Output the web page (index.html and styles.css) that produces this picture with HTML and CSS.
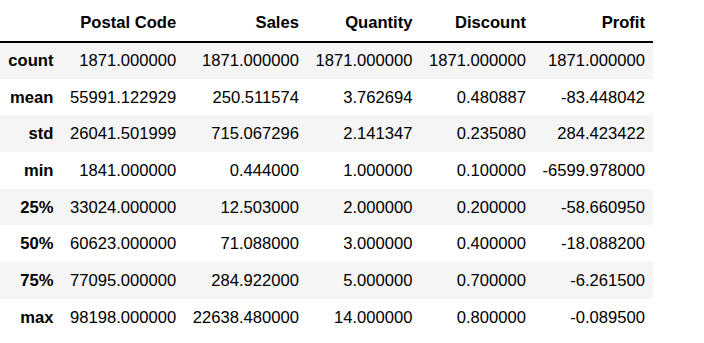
FILE: index.html
```html
<!DOCTYPE html>
<html lang="en">
<head>
  <meta charset="UTF-8">
  <title>describe()</title>
  <link rel="stylesheet" href="styles.css">
</head>
<body>
  <table class="dataframe">
    <thead>
      <tr>
        <th></th>
        <th>Postal Code</th>
        <th>Sales</th>
        <th>Quantity</th>
        <th>Discount</th>
        <th>Profit</th>
      </tr>
    </thead>
    <tbody>
      <tr><th>count</th><td>1871.000000</td><td>1871.000000</td><td>1871.000000</td><td>1871.000000</td><td>1871.000000</td></tr>
      <tr><th>mean</th><td>55991.122929</td><td>250.511574</td><td>3.762694</td><td>0.480887</td><td>-83.448042</td></tr>
      <tr><th>std</th><td>26041.501999</td><td>715.067296</td><td>2.141347</td><td>0.235080</td><td>284.423422</td></tr>
      <tr><th>min</th><td>1841.000000</td><td>0.444000</td><td>1.000000</td><td>0.100000</td><td>-6599.978000</td></tr>
      <tr><th>25%</th><td>33024.000000</td><td>12.503000</td><td>2.000000</td><td>0.200000</td><td>-58.660950</td></tr>
      <tr><th>50%</th><td>60623.000000</td><td>71.088000</td><td>3.000000</td><td>0.400000</td><td>-18.088200</td></tr>
      <tr><th>75%</th><td>77095.000000</td><td>284.922000</td><td>5.000000</td><td>0.700000</td><td>-6.261500</td></tr>
      <tr><th>max</th><td>98198.000000</td><td>22638.480000</td><td>14.000000</td><td>0.800000</td><td>-0.089500</td></tr>
    </tbody>
  </table>
</body>
</html>
```

FILE: styles.css
```css
* {
  box-sizing: border-box;
}

html, body {
  margin: 0;
  padding: 0;
  background: #fff;
  font-family: "Liberation Sans", Arial, sans-serif;
  color: #000;
}

.dataframe {
  border-collapse: collapse;
  border-spacing: 0;
  font-size: 16.6px;
}

.dataframe th,
.dataframe td {
  text-align: right;
  white-space: nowrap;
  padding: 0 8.3px;
  line-height: 19px;
  vertical-align: middle;
}

.dataframe thead th {
  font-weight: bold;
  height: 42px;
  padding-top: 3px;
  border-bottom: 2px solid #000;
}

.dataframe tbody th,
.dataframe tbody td {
  height: 36.7px;
}

.dataframe tbody th {
  font-weight: bold;
}

.dataframe tbody tr:nth-child(odd) {
  background: #f5f5f5;
}
```
